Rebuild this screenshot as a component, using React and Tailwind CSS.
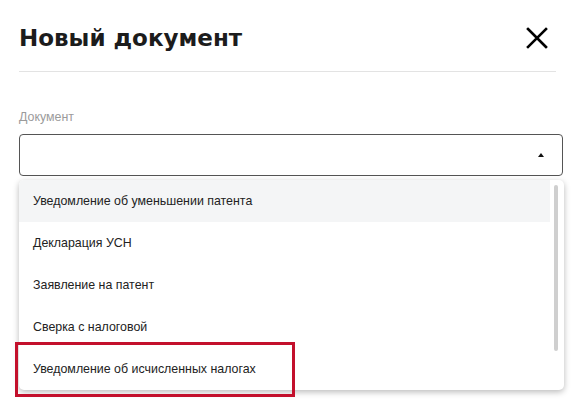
import React from 'react';

const options = [
  'Уведомление об уменьшении патента',
  'Декларация УСН',
  'Заявление на патент',
  'Сверка с налоговой',
  'Уведомление об исчисленных налогах',
];

export default function App() {
  return (
    <div className="relative w-[580px] h-[412px] overflow-hidden bg-white font-['Liberation_Sans',Arial,sans-serif]">
      <div className="pl-[19px]">
        {/* Header */}
        <div className="flex h-[71px] w-[537px] items-center justify-between pt-[5px]">
          <h1 className="font-['DejaVu_Sans',sans-serif] text-[23px] font-bold leading-none text-[#1c1c1c]">
            Новый документ
          </h1>
          <button className="mr-[8px] text-black">
            <svg width="22" height="22" viewBox="0 0 22 22" fill="none" stroke="currentColor" strokeWidth="2.6" strokeLinecap="square">
              <path d="M2 2L20 20M20 2L2 20" />
            </svg>
          </button>
        </div>
        <div className="h-px w-[537px] bg-[#e3e3e3]" />

        {/* Field */}
        <div className="mt-[37px] text-[12.4px] leading-[16px] text-[#9b9b9b]">Документ</div>
        <div className="relative mt-[9px] w-[544px]">
          <div className="flex h-[42px] items-center justify-end rounded-[4px] border border-[#555] pr-[18px]">
            <span className="h-0 w-0 border-x-[3px] border-b-[4px] border-x-transparent border-b-[#111]" />
          </div>

          {/* Options menu */}
          <div className="absolute left-0 top-[46px] h-[210px] w-[545px] overflow-hidden rounded-[5px] bg-white shadow-[0_2px_6px_rgba(0,0,0,0.28)]">
            {options.map((o, i) => (
              <div
                key={o}
                className={`flex h-[42px] w-[531px] items-center pl-[14px] text-[12.4px] text-[#222] ${i === 0 ? 'bg-[#f4f5f6]' : ''}`}
              >
                {o}
              </div>
            ))}
            <div className="absolute right-[6px] top-[5px] h-[166px] w-[4px] rounded-full bg-[#cfcfcf]" />
          </div>
        </div>
      </div>

      {/* Highlight frame */}
      <div className="absolute left-[15px] top-[342px] h-[55px] w-[280px] border-[3px] border-[#c3102c]" />
    </div>
  );
}
